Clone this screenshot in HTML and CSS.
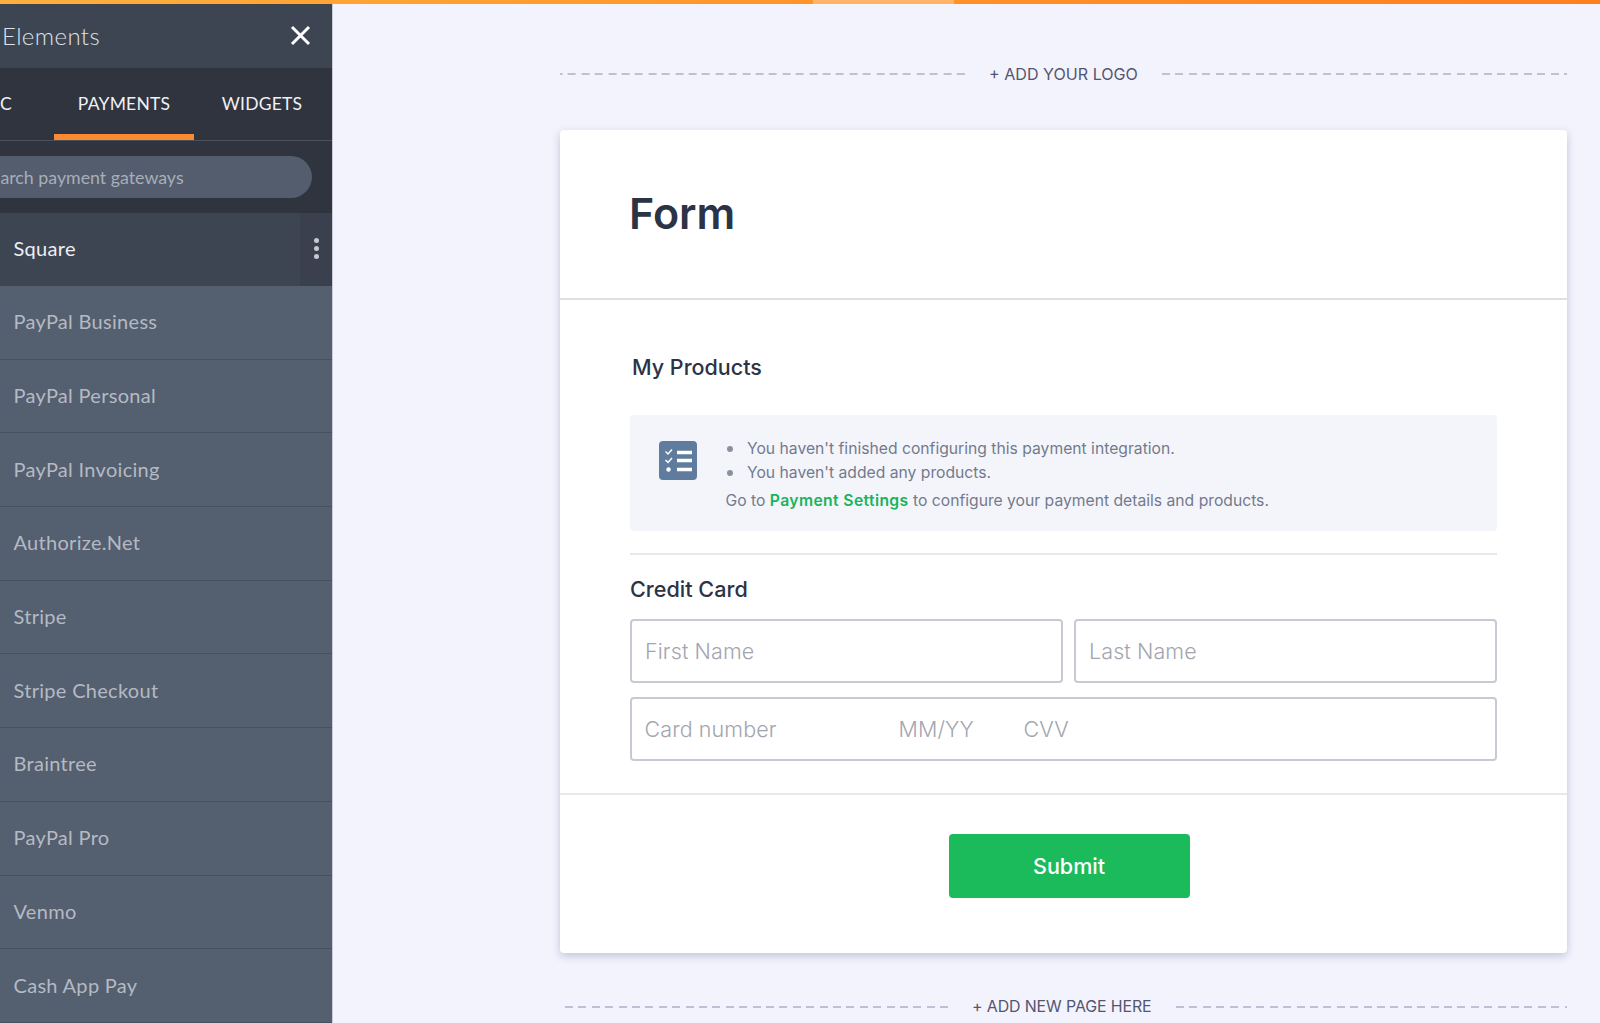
FILE: index.html
```html
<!DOCTYPE html>
<html lang="en">
<head>
<meta charset="utf-8">
<title>Form builder</title>
<link rel="stylesheet" href="styles.css">
</head>
<body>
<div class="topbar"><div class="topbar-seg"></div></div>
<div class="app">
  <aside class="sidebar">
    <header class="side-head">
      <span class="side-title">Elements</span>
      <svg class="close" width="21" height="21" viewBox="0 0 21 21"><path d="M2 2 19 19M19 2 2 19" stroke="#fff" stroke-width="3" fill="none"/></svg>
    </header>
    <nav class="tabs">
      <span class="tab tab-basic">BASIC</span>
      <span class="tab tab-active">PAYMENTS</span>
      <span class="tab tab-widgets">WIDGETS</span>
    </nav>
    <div class="search-wrap"><div class="search">Search payment gateways</div></div>
    <ul class="gateways">
      <li class="gateway gateway-active"><span class="gateway-name">Square</span><span class="kebab"><i></i><i></i><i></i></span></li>
      <li class="gateway">PayPal Business</li>
      <li class="gateway">PayPal Personal</li>
      <li class="gateway">PayPal Invoicing</li>
      <li class="gateway">Authorize.Net</li>
      <li class="gateway">Stripe</li>
      <li class="gateway">Stripe Checkout</li>
      <li class="gateway">Braintree</li>
      <li class="gateway">PayPal Pro</li>
      <li class="gateway">Venmo</li>
      <li class="gateway">Cash App Pay</li>
    </ul>
  </aside>
  <main class="canvas">
    <div class="adder adder-logo"><span class="dash dash-logo"></span><span class="adder-text">+ ADD YOUR LOGO</span><span class="dash"></span></div>
    <section class="card">
      <div class="card-head"><h1>Form</h1></div>
      <div class="card-body">
        <h2 class="products-title">My Products</h2>
        <div class="notice">
          <svg class="notice-icon" width="38" height="39" viewBox="0 0 38 39">
            <rect width="38" height="39" rx="4" fill="#5f7c9f"/>
            <path d="M6.500 10.500 9 13 13 8.500M6.500 19 9 21.500 13 17" stroke="#fff" stroke-width="1.500" fill="none"/>
            <circle cx="9.500" cy="28.500" r="2.200" fill="#fff"/>
            <path d="M18 11.500H33M18 19.500H33M18 28.500H33" stroke="#fff" stroke-width="3.500" fill="none"/>
          </svg>
          <div class="notice-text">
            <ul>
              <li>You haven't finished configuring this payment integration.</li>
              <li>You haven't added any products.</li>
            </ul>
            <p>Go to <a class="link">Payment Settings</a> to configure your payment details and products.</p>
          </div>
        </div>
        <div class="cc">
          <h3 class="cc-title">Credit Card</h3>
          <div class="name-row">
            <div class="field">First Name</div>
            <div class="field">Last Name</div>
          </div>
          <div class="field card-field"><span class="cf-num">Card number</span><span class="cf-exp">MM/YY</span><span>CVV</span></div>
        </div>
      </div>
      <div class="card-foot"><button class="submit">Submit</button></div>
    </section>
    <div class="adder adder-page"><span class="dash dash-page"></span><span class="adder-text">+ ADD NEW PAGE HERE</span><span class="dash"></span></div>
  </main>
</div>
</body>
</html>
```
FILE: styles.css
```css
* { box-sizing: border-box; }
html, body { margin: 0; height: 100%; overflow: hidden; }
body { background: #f3f3fe; font-family: Inter, "Liberation Sans", sans-serif; display: flex; flex-direction: column; }
.topbar { height: 4px; flex: none; display: flex; justify-content: flex-start; background: linear-gradient(90deg, #fdb03c 0%, #ff9a2c 40%, #ff7f1e 100%); }
.topbar-seg { width: 141px; margin-left: 813px; background: #ffb468; }
.app { flex: 1; display: flex; min-height: 0; }

.sidebar { width: 333px; flex: none; background: #545f6f; border-right: 1px solid #c9cbd6; overflow: hidden; font-family: Lato, "Liberation Sans", sans-serif; }
.side-head { height: 64px; background: #3e4552; display: flex; align-items: center; justify-content: space-between; padding: 0 21px 2px 2px; }
.side-title { color: #dfe2e8; font-size: 24px; letter-spacing: .4px; font-weight: 300; }
.close { display: block; margin-top: 1px; }
.tabs { height: 73px; background: #2f343f; border-bottom: 1px solid #4a505c; display: flex; justify-content: flex-end; padding-right: 2px; }
.tab { color: #f0f1f4; font-size: 17.500px; display: flex; align-items: center; justify-content: center; white-space: nowrap; padding-bottom: 2px; letter-spacing: .2px; }
.tab-basic { width: 54px; overflow: hidden; justify-content: flex-end; padding-right: 42px; flex: none; }
.tab-active { width: 140px; border-bottom: 6px solid #fb8a33; padding: 4px 0 0; }
.tab-widgets { width: 136px; }
.search-wrap { height: 72px; background: #2f343f; display: flex; align-items: center; padding-right: 20px; overflow: hidden; }
.search { height: 42px; width: 100%; background: #535d6e; border-radius: 0 21px 21px 0; color: #a8aeb9; font-size: 17.800px; line-height: 42px; text-indent: -18.600px; white-space: nowrap; }
.gateways { list-style: none; margin: 0; padding: 0; }
.gateway { height: 73.700px; padding: 0 0 2px 13.500px; display: flex; align-items: center; color: #b4bac4; font-size: 20px; border-bottom: 1px solid #48515f; letter-spacing: .3px; }
.gateway-active { height: 73px; background: #3e4552; color: #eceef2; justify-content: space-between; border-bottom: 0; padding-bottom: 0; }
.gateway-name { margin-top: -3px; }
.kebab { width: 32px; height: 100%; background: #3a404d; display: flex; flex-direction: column; align-items: center; justify-content: center; gap: 3px; padding-bottom: 2px; }
.kebab i { width: 5px; height: 5px; border-radius: 50%; background: #c6c9cf; display: block; }

.canvas { width: 1007px; margin-left: 227px; display: flex; flex-direction: column; }
.adder { display: flex; align-items: center; flex: none; color: #54566e; font-size: 16.100px; }
.adder-logo { height: 126px; padding-top: 13px; gap: 24px; }
.adder-logo .adder-text { margin-top: 1px; }
.adder-page { height: 70px; gap: 24px; padding: 37px 0 0 5px; font-size: 15.900px; }
.adder-page .adder-text { letter-spacing: -.1px; }
.dash { flex: 1; height: 2px; background: repeating-linear-gradient(90deg, #bfc0d6 0 8px, transparent 8px 13.400px); }
.dash-logo { background-position-x: -5.400px; }
.dash-page { flex: 0 0 383px; }
.adder-text { white-space: nowrap; }

.card { background: #fff; border-radius: 4px; box-shadow: 0 3px 8px rgba(70, 74, 110, .28); height: 823px; display: flex; flex-direction: column; flex: none; }
.card-head { height: 170px; border-bottom: 2px solid #dfe0e6; padding: 0 0 2px 69px; display: flex; align-items: center; }
h1 { margin: 0; font-size: 43px; font-weight: 600; color: #2c3345; line-height: 1; }
.card-body { height: 493px; padding: 0 70px; }
.products-title { margin: 0; padding: 54px 0 0 2px; height: 115px; font-size: 21.500px; font-weight: 500; color: #2c3345; line-height: 26px; }
.notice { height: 116px; background: #f3f5fb; border-radius: 4px; padding: 26px 0 0 29px; display: flex; gap: 28.500px; }
.notice-icon { display: block; flex: none; }
.notice-text { color: #737a8d; font-size: 15.700px; flex: 1; margin-top: -4px; }
.notice-text ul { margin: 0; padding: 0; list-style: none; }
.notice-text li { line-height: 24px; display: flex; align-items: center; }
.notice-text li::before { content: ""; width: 6px; height: 6px; border-radius: 50%; background: #8a90a0; margin: 0 14.500px 0 1px; flex: none; }
.notice-text p { margin: 4px 0 0; line-height: 24px; }
.link { color: #18b45c; font-weight: 600; letter-spacing: .38px; }
.cc { margin-top: 22px; border-top: 2px solid #e7e8ec; }
.cc-title { margin: 0; padding-top: 21px; height: 64px; font-size: 21.600px; font-weight: 500; color: #2c3345; line-height: 26px; }
.name-row { display: grid; grid-template-columns: 433px 1fr; gap: 11px; }
.field { height: 64px; border: 2px solid #c8cad3; border-radius: 4px; color: #a3a6b0; font-size: 21.500px; letter-spacing: .1px; display: flex; align-items: center; padding-left: 13px; font-weight: 300; }
.card-field { margin-top: 14px; padding-left: 12.500px; }
.cf-num { width: 254px; }
.cf-exp { width: 125px; }
.card-foot { flex: 1; border-top: 2px solid #e7e8ec; padding: 39px 0 0 11px; display: flex; justify-content: center; align-items: flex-start; }
.submit { width: 241px; height: 64px; background: #1bbb5b; border: 0; border-radius: 4px; color: #fff; font: 500 21.500px Inter, sans-serif; }
```
